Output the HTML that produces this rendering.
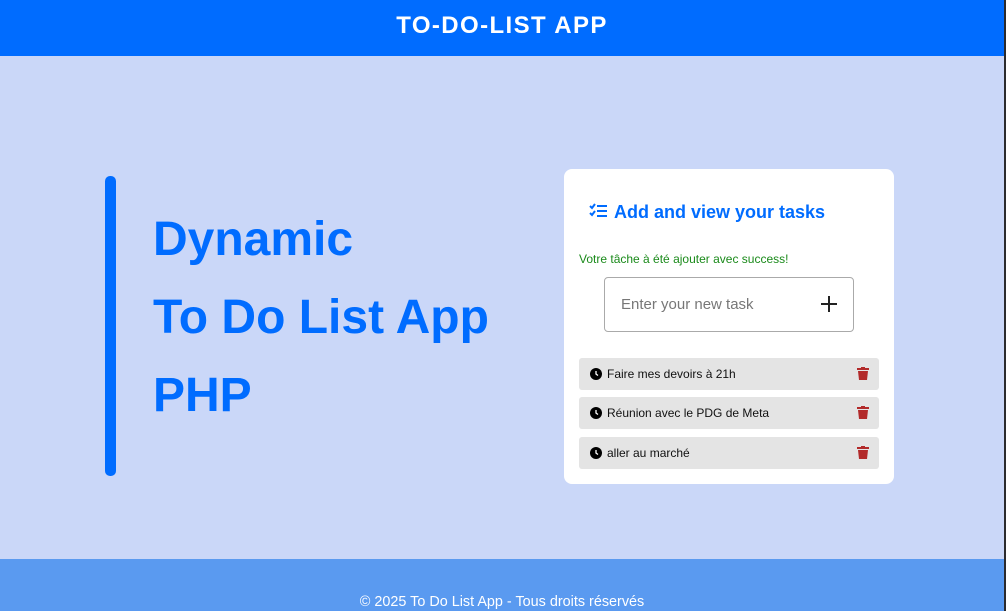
<!DOCTYPE html>
<html><head><meta charset="utf-8"><style>
*{margin:0;padding:0;box-sizing:border-box}
body{width:1006px;height:611px;overflow:hidden;background:#cad7f8;font-family:"Liberation Sans",sans-serif;position:relative}
.hdr{position:absolute;left:0;top:0;width:1004px;height:56px;background:#006cff;color:#fff;font-weight:bold;font-size:24px;letter-spacing:1.4px;text-align:center;line-height:52px}
.sb{position:absolute;right:0;top:0;width:2px;height:611px;background:#2b2b2e}
.bar{position:absolute;left:105px;top:176px;width:11px;height:300px;background:#006cff;border-radius:5px}
.big{position:absolute;left:153px;color:#006cff;font-weight:bold;font-size:48px;line-height:1}
.card{position:absolute;left:564px;top:169px;width:330px;height:315px;background:#fff;border-radius:8px}
.title{position:absolute;left:50px;top:33px;color:#006cff;font-weight:bold;font-size:18px}
.msg{position:absolute;left:15px;top:83px;color:#1a8a1a;font-size:12px}
.inp{position:absolute;left:40px;top:108px;width:250px;height:55px;border:1px solid #aaa;border-radius:4px}
.inp span{position:absolute;left:16px;top:18px;color:#777;font-size:15px}
.plus{position:absolute;right:16px;top:18px}
.task{position:absolute;left:15px;width:300px;height:32px;background:#e4e4e4;border-radius:3px;font-size:12px;color:#111}
.task .t{position:absolute;left:28px;top:9px}
.task svg.c{position:absolute;left:11px;top:10px}
.task svg.d{position:absolute;right:10px;top:9px}
.ftr{position:absolute;left:0;top:559px;width:1004px;height:52px;background:#5a9af0;color:#fff;font-size:14.4px;text-align:center;padding-top:35px}
</style></head><body>
<div class="hdr">TO-DO-LIST APP</div>
<div class="sb"></div>
<div class="bar"></div>
<div class="big" style="top:216px">Dynamic</div>
<div class="big" style="top:294px">To Do List App</div>
<div class="big" style="top:372px">PHP</div>
<div class="card">
<svg style="position:absolute;left:25px;top:34px" width="19" height="16" viewBox="0 0 19 16"><path d="M1 3l2 2 3-4M1 10l2 2 3-4" stroke="#006cff" stroke-width="2" fill="none"/><rect x="8" y="2" width="10" height="2" fill="#006cff"/><rect x="8" y="7" width="10" height="2" fill="#006cff"/><rect x="8" y="12" width="10" height="2" fill="#006cff"/></svg>
<div class="title">Add and view your tasks</div>
<div class="msg">Votre tâche à été ajouter avec success!</div>
<div class="inp"><span>Enter your new task</span><svg class="plus" width="16" height="16" viewBox="0 0 16 16"><path d="M8 0v16M0 8h16" stroke="#222" stroke-width="2"/></svg></div>
<div class="task" style="top:189px"><svg class="c" width="12" height="12" viewBox="0 0 12 12"><circle cx="6" cy="6" r="6" fill="#000"/><path d="M6 3v3l2 1.5" stroke="#fff" stroke-width="1.3" fill="none"/></svg><span class="t">Faire mes devoirs à 21h</span><svg class="d" width="12" height="13" viewBox="0 0 12 13"><rect x="0" y="1" width="12" height="2" fill="#b22a2a"/><rect x="4" y="0" width="4" height="2" fill="#b22a2a"/><path d="M1 4h10l-1 9H2z" fill="#b22a2a"/></svg></div>
<div class="task" style="top:228px"><svg class="c" width="12" height="12" viewBox="0 0 12 12"><circle cx="6" cy="6" r="6" fill="#000"/><path d="M6 3v3l2 1.5" stroke="#fff" stroke-width="1.3" fill="none"/></svg><span class="t">Réunion avec le PDG de Meta</span><svg class="d" width="12" height="13" viewBox="0 0 12 13"><rect x="0" y="1" width="12" height="2" fill="#b22a2a"/><rect x="4" y="0" width="4" height="2" fill="#b22a2a"/><path d="M1 4h10l-1 9H2z" fill="#b22a2a"/></svg></div>
<div class="task" style="top:268px"><svg class="c" width="12" height="12" viewBox="0 0 12 12"><circle cx="6" cy="6" r="6" fill="#000"/><path d="M6 3v3l2 1.5" stroke="#fff" stroke-width="1.3" fill="none"/></svg><span class="t">aller au marché</span><svg class="d" width="12" height="13" viewBox="0 0 12 13"><rect x="0" y="1" width="12" height="2" fill="#b22a2a"/><rect x="4" y="0" width="4" height="2" fill="#b22a2a"/><path d="M1 4h10l-1 9H2z" fill="#b22a2a"/></svg></div>
</div>
<div class="ftr">© 2025 To Do List App - Tous droits réservés</div>
</body></html>
